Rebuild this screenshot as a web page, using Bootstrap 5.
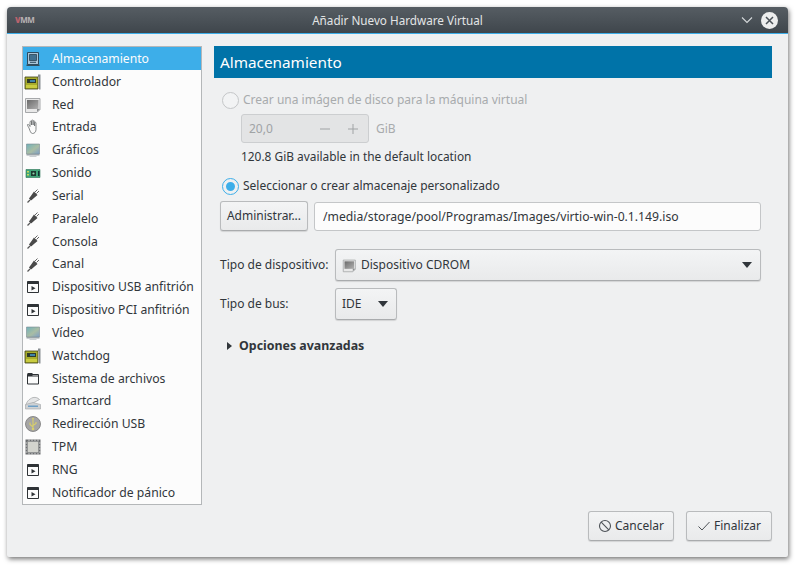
<!DOCTYPE html>
<html lang="es">
<head>
  <meta charset="UTF-8" />
  <title>Añadir Nuevo Hardware Virtual</title>
  <link rel="stylesheet" href="https://cdn.jsdelivr.net/npm/bootstrap@5.3.2/dist/css/bootstrap.min.css" />
  <style>
    html, body { height: 100%; }
    body {
      background: #fff;
      font-family: "Noto Sans", sans-serif;
      font-size: 12px;
      color: #31363b;
      padding: 7px 12px 12px 7px;
      overflow: hidden;
    }
    .hw-window {
      width: 781px;
      height: 550px;
      background: #eff0f1;
      border-radius: 4px 4px 2px 2px;
      box-shadow: 1px 2px 5px rgba(0, 0, 0, .55);
    }
    .hw-title {
      height: 27px;
      background: linear-gradient(#565d63, #3f464c);
      border-bottom: 1px solid #3daee9;
      border-radius: 4px 4px 0 0;
      color: #e3e5e6;
      padding: 0 10px 0 8px;
      position: relative;
    }
    .hw-title-text { position: absolute; left: 0; right: 0; top: 5px; text-align: center; line-height: 16px; font-size: 11.7px; }
    .hw-logo { font-size: 8px; font-weight: 700; letter-spacing: -.4px; color: #b9b3b4; line-height: 1; }
    .hw-logo b { color: #b8636e; }
    .hw-body { height: 523px; padding: 12px 16px 16px 15px; }
    .hw-list {
      width: 180px;
      height: 459px;
      border: 1px solid #b4b7b9;
      border-radius: 0;
      background: #fcfcfc;
      flex: none;
      overflow: hidden;
    }
    .hw-item {
      height: 22.85px;
      flex: none;
      padding: 1px 0 0 1px;
      border: 0;
      background: transparent;
      color: #31363b;
      font-size: 12.2px;
      display: flex;
      align-items: center;
      line-height: 1;
    }
    .hw-item.active { background: #3daee9; color: #fcfcfc; border: 0; margin: 0; }
    .hw-item svg { width: 18px; height: 18px; flex: none; margin-right: 10px; }
    .hw-panel { width: 558px; margin-left: 12px; }
    .hw-head {
      height: 32px;
      background: #0073a8;
      color: #fff;
      font-size: 15.3px;
      line-height: 32px;
      padding-left: 6px;
    }
    .hw-radio { display: flex; align-items: center; height: 18px; padding-left: 8px; }
    .hw-radio i {
      width: 17px; height: 17px; border-radius: 50%; flex: none; margin-right: 4px;
      background: #f2f3f4; border: 1px solid #c4c6c8;
    }
    .hw-radio.on i {
      background: #3daee9; border: 3px solid #eff0f1; outline: 1px solid #3daee9;
      width: 15px; height: 15px; margin: 0 5px 0 1px;
    }
    .hw-off { color: #a8abad; }
    .hw-spin {
      width: 128px; height: 29px; background: #e3e4e5; border: 1px solid #ccced0; border-radius: 3px;
      padding: 0 9px 0 7px; color: #a0a3a5;
    }
    .hw-spin svg { width: 12px; height: 12px; margin-left: 16px; }
    .hw-spin svg:first-of-type { margin-left: auto; }
    .hw-btn {
      font-size: 12px;
      color: #31363b;
      background: linear-gradient(#f3f4f5, #e9eaeb);
      border: 1px solid #b9bbbd;
      border-bottom-color: #a9abad;
      border-radius: 3px;
      box-shadow: 0 1px 1px rgba(0, 0, 0, .12);
      padding: 0;
      line-height: 1;
    }
    .hw-btn:hover { color: #31363b; background: #e9eaeb; border-color: #b9bbbd; }
    .hw-input {
      flex: none; width: 447px; height: 29px; margin: 1px 0 0 6px; font-size: 12.2px; color: #31363b;
      background: #fcfcfc; border: 1px solid #c4c6c8; border-radius: 3px; padding: 0 8px;
      font-family: inherit;
    }
    .hw-label { width: 115px; flex: none; }
    .hw-select { height: 32px; display: flex; align-items: center; text-align: left; padding: 0 8px 0 6px; }
    .hw-select.dropdown-toggle::after {
      margin-left: auto; border-top: 6px solid #31363b; border-left: 5px solid transparent;
      border-right: 5px solid transparent; border-bottom: 0;
    }
    .hw-select svg { width: 15px; height: 15px; margin-right: 4px; }
    .hw-tri { width: 0; height: 0; border-left: 5px solid #31363b; border-top: 4.5px solid transparent; border-bottom: 4.5px solid transparent; margin-right: 7px; }
    .hw-more { font-size: 12.4px; }
    .hw-avail { font-size: 11.9px; }
    .hw-foot { width: 86px; height: 30px; display: flex; align-items: center; justify-content: center; }
    .hw-foot svg { width: 14px; height: 14px; margin-right: 3px; }
  </style>
</head>
<body>
  <svg width="0" height="0" class="d-block position-absolute">
    <defs>
      <linearGradient id="gScreen" x1="0" y1="0" x2="1" y2="1"><stop offset="0" stop-color="#6fb1bb"/><stop offset=".55" stop-color="#a9bda4"/><stop offset="1" stop-color="#7d9ec6"/></linearGradient>
      <linearGradient id="gGrey" x1="0" y1="0" x2="1" y2="1"><stop offset="0" stop-color="#6b6b6b"/><stop offset="1" stop-color="#b0b0b0"/></linearGradient>
      <symbol id="i-disk" viewBox="0 0 18 18"><path d="M3.500 2.500h11v12h-11z" fill="#a9c5d8" stroke="#2c4a5e"/><path d="M5.500 4.500h7v6h-7z" fill="#41708f" stroke="#1f3a4c" stroke-width=".7"/><path d="M2.500 14.500h13v1.500h-13z" fill="#33505f"/><path d="M6 12.300h6" stroke="#2c4a5e"/></symbol>
      <symbol id="i-card" viewBox="0 0 18 18"><path d="M1 4h13v12H1z" fill="#a8ad2c" stroke="#3d3f16" stroke-width=".8"/><path d="M3 6h9v4H3z" fill="#2f3a2a"/><path d="M6 7h5v2H6z" fill="#3f84a8"/><path d="M2 12h11v3H2z" fill="#c9cc40"/><path d="M14 1.500h2.500v15H15V4h-1z" fill="#8a8f94"/></symbol>
      <symbol id="i-net" viewBox="0 0 18 18"><path d="M1.500 2.500h14.500v11l-3 3h-11.500z" fill="#e8e8e8" stroke="#a6a8aa"/><path d="M3 4h11.500v9H3z" fill="url(#gGrey)"/><path d="M13 16v-3h3z" fill="#8d8f91"/></symbol>
      <symbol id="i-hand" viewBox="0 0 18 18"><path d="M5 10 3.500 7.500c-.6-1 .7-1.600 1.300-.7L6 8.500V4c0-1.100 1.500-1.100 1.500 0v3-4.200c0-1.100 1.600-1.100 1.600 0V7 3.500c0-1.100 1.500-1.100 1.500 0V8 5c0-1 1.400-1 1.400 0v6.500c0 2.500-1.500 4-3.500 4H8.500C6.800 15.500 6 13 5 10z" fill="#fbfbfb" stroke="#6b6e70" stroke-width=".8"/></symbol>
      <symbol id="i-screen" viewBox="0 0 18 18"><path d="M2.500 3h13v10h-13z" fill="url(#gScreen)" stroke="#7c8b91" stroke-width=".6"/><path d="M2.500 13h13v1.500h-13z" fill="#9aa4a9"/><path d="M5.500 14.500h7V16h-7z" fill="#c9ced1"/></symbol>
      <symbol id="i-sound" viewBox="0 0 18 18"><path d="M2 5.500h14v8H2z" fill="#3fa578" stroke="#2a7254" stroke-width=".6"/><path d="M7 7h5v5H7z" fill="#1c3a30"/><circle cx="9.500" cy="9.500" r="1.100" fill="#8fd0a9"/><path d="M3 7h2v1.500H3zM3 10h2v1.500H3z" fill="#c7d65a"/><path d="M14 7h1.500v5H14z" fill="#133"/></symbol>
      <symbol id="i-plug" viewBox="0 0 18 18"><path d="M3.500 15.500 6 13" stroke="#555" stroke-width="1.200"/><path d="M5 11.500 10.500 6 12.500 8 7 13.500z" fill="#3f3f3f"/><path d="M5.500 11 10 4.500 13.500 8 7.500 13z" fill="#4a4a4a"/><path d="M11 5 13.500 2.500M12.500 6.500 15 4" stroke="#666" stroke-width="1"/></symbol>
      <symbol id="i-app" viewBox="0 0 18 18"><path d="M3.500 3.500h11v11h-11z" fill="#fbfbfb" stroke="#2f3336"/><path d="M3.500 3.500h11v2.500h-11z" fill="#2f3336"/><path d="M7.500 8v4.500L11.500 10.250z" fill="#2f3336"/></symbol>
      <symbol id="i-folder" viewBox="0 0 18 18"><path d="M3.500 4.500h11v9.500h-11z" fill="#fbfbfb" stroke="#2f3336"/><path d="M3.500 3h5v2.500h6v1h-11z" fill="#2f3336"/></symbol>
      <symbol id="i-card2" viewBox="0 0 18 18"><path d="M2 13c0-4 3-7 7-8.500 3-.5 5 .5 6.500 2L9 10z" fill="#e4e5e6" stroke="#9fa2a4" stroke-width=".7"/><path d="M1.500 11.500 9 9.500l7.500 2V16h-15z" fill="#cfd2d4" stroke="#9fa2a4" stroke-width=".6"/><path d="M4 12.500h10v1.500H4z" fill="#6d9fc6"/></symbol>
      <symbol id="i-usb" viewBox="0 0 18 18"><circle cx="9" cy="9" r="7.500" fill="#a5a5a5" stroke="#777" stroke-width=".8"/><path d="M9 3v11M9 12 6 9.500V7.500M9 10.500l3-2V7" stroke="#d9cf6a" stroke-width="1.100" fill="none"/><circle cx="9" cy="14" r="1.300" fill="#d9cf6a"/><path d="M8 4h2l-1-1.500z" fill="#d9cf6a"/></symbol>
      <symbol id="i-chip" viewBox="0 0 18 18"><path d="M1.500 1.500h15v15h-15z" fill="#6a6d6f"/><path d="M3.500 3.500h11v11h-11z" fill="#d3d4ce" stroke="#8b8d8e" stroke-width=".6"/><path d="M1.500 5H3M1.500 8H3M1.500 11H3M1.500 14H3M15 5h1.500M15 8h1.500M15 11h1.500M15 14h1.500M5 1.500V3M8 1.500V3M11 1.500V3M14 1.500V3M5 15v1.500M8 15v1.500M11 15v1.500M14 15v1.500" stroke="#eee" stroke-width=".8"/></symbol>
    </defs>
  </svg>

  <div class="hw-window">
    <div class="hw-title d-flex align-items-center">
      <span class="hw-logo"><b>V</b>MM</span>
      <div class="hw-title-text">Añadir Nuevo Hardware Virtual</div>
      <svg class="ms-auto me-2" width="12" height="8" viewBox="0 0 12 8"><path d="M1 1.500 6 6.500 11 1.500" fill="none" stroke="#d5d8da" stroke-width="1.100"/></svg>
      <svg width="17" height="17" viewBox="0 0 17 17"><circle cx="8.500" cy="8.500" r="8.500" fill="#eceded"/><path d="M5 5l7 7M12 5l-7 7" stroke="#4a5157" stroke-width="1.500"/></svg>
    </div>

    <div class="hw-body d-flex">
      <div id="hwList" class="list-group hw-list"></div>

      <div class="hw-panel d-flex flex-column">
        <div class="hw-head">Almacenamiento</div>

        <div class="hw-radio hw-off" style="height: 22px; margin-top: 11px">
          <i></i>Crear una imágen de disco para la máquina virtual
        </div>
        <div class="d-flex align-items-center hw-off" style="margin: 3px 0 0 27px">
          <div class="hw-spin d-flex align-items-center">
            20,0
            <svg viewBox="0 0 12 12"><path d="M1 6h10" stroke="#a0a3a5"/></svg>
            <svg viewBox="0 0 12 12"><path d="M1 6h10M6 1v10" stroke="#a0a3a5"/></svg>
          </div>
          <span style="margin-left: 7px">GiB</span>
        </div>
        <div class="hw-avail" style="margin: 6px 0 0 27px; line-height: 14px">120.8 GiB available in the default location</div>

        <div class="hw-radio on" style="margin-top: 14px"><i></i>Seleccionar o crear almacenaje personalizado</div>

        <div class="d-flex" style="margin: 6px 0 0 6px">
          <button type="button" class="btn hw-btn flex-none" style="width: 88px; height: 30px">Administrar...</button>
          <input class="hw-input" type="text" value="/media/storage/pool/Programas/Images/virtio-win-0.1.149.iso" />
        </div>

        <div class="d-flex align-items-center" style="margin: 18px 0 0 6px">
          <span class="hw-label">Tipo de dispositivo:</span>
          <button type="button" class="btn hw-btn hw-select dropdown-toggle" style="width: 426px">
            <svg><use href="#i-net"/></svg>Dispositivo CDROM
          </button>
        </div>
        <div class="d-flex align-items-center" style="margin: 7px 0 0 6px">
          <span class="hw-label">Tipo de bus:</span>
          <button type="button" class="btn hw-btn hw-select dropdown-toggle" style="width: 62px">IDE</button>
        </div>

        <div class="d-flex align-items-center fw-bold hw-more" style="margin: 17px 0 0 13px">
          <span class="hw-tri"></span>Opciones avanzadas
        </div>

        <div class="d-flex justify-content-end gap-2 mt-auto">
          <button type="button" class="btn hw-btn hw-foot me-1">
            <svg viewBox="0 0 14 14"><circle cx="7" cy="7" r="5.500" fill="none" stroke="#4d5257" stroke-width="1.100"/><path d="M3.200 3.200l7.600 7.600" stroke="#4d5257" stroke-width="1.100"/></svg>Cancelar
          </button>
          <button type="button" class="btn hw-btn hw-foot">
            <svg viewBox="0 0 14 14"><path d="M1.500 7.500 5 11l7.500-8" fill="none" stroke="#4d5257"/></svg>Finalizar
          </button>
        </div>
      </div>
    </div>
  </div>

  <script src="https://cdn.jsdelivr.net/npm/bootstrap@5.3.2/dist/js/bootstrap.bundle.min.js"></script>
  <script>
    const rows = [
      ["Almacenamiento", "disk"], ["Controlador", "card"], ["Red", "net"], ["Entrada", "hand"],
      ["Gráficos", "screen"], ["Sonido", "sound"], ["Serial", "plug"], ["Paralelo", "plug"],
      ["Consola", "plug"], ["Canal", "plug"], ["Dispositivo USB anfitrión", "app"],
      ["Dispositivo PCI anfitrión", "app"], ["Vídeo", "screen"], ["Watchdog", "card"],
      ["Sistema de archivos", "folder"], ["Smartcard", "card2"], ["Redirección USB", "usb"],
      ["TPM", "chip"], ["RNG", "app"], ["Notificador de pánico", "app"]
    ];
    const list = document.getElementById("hwList");
    rows.forEach((r, i) => {
      const a = document.createElement("div");
      a.className = "list-group-item hw-item" + (i === 0 ? " active" : "");
      a.innerHTML = `<svg><use href="#i-${r[1]}"/></svg><span>${r[0]}</span>`;
      list.appendChild(a);
    });
  </script>
</body>
</html>
